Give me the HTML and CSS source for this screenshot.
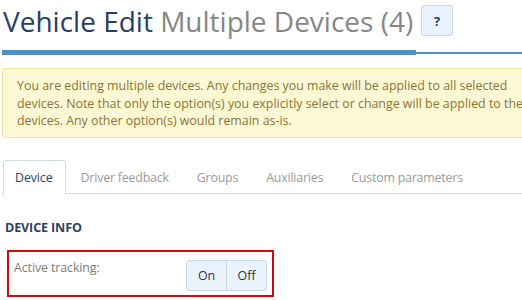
FILE: index.html
```html
<!DOCTYPE html>
<html>
<head>
<meta charset="utf-8">
<link rel="stylesheet" href="styles.css">
</head>
<body>
<div class="page">
  <div class="header">
    <h1 class="title"><span class="title-main">Vehicle Edit</span> <span class="title-sub">Multiple Devices (4)</span></h1>
    <button class="help-btn">?</button>
  </div>
  <div class="rule"><div class="rule-thick"></div><div class="rule-thin"></div></div>
  <div class="alert">You are editing multiple devices. Any changes you make will be applied to all selected<br>devices. Note that only the option(s) you explicitly select or change will be applied to the<br>devices. Any other option(s) would remain as-is.</div>
  <div class="tabs">
    <div class="tab active">Device</div>
    <div class="tab">Driver feedback</div>
    <div class="tab">Groups</div>
    <div class="tab">Auxiliaries</div>
    <div class="tab">Custom parameters</div>
  </div>
  <h2 class="section-title">DEVICE INFO</h2>
  <div class="field-row">
    <span class="field-label">Active tracking:</span>
    <div class="toggle">
      <span class="toggle-opt">On</span>
      <span class="toggle-opt">Off</span>
    </div>
  </div>
</div>
</body>
</html>
```
FILE: styles.css
```css
html, body {
  margin: 0;
  padding: 0;
  background: #fff;
  overflow: hidden;
}
body {
  font-family: "Open Sans", "Noto Sans", sans-serif;
  width: 522px;
  height: 300px;
}
.page {
  padding-left: 2px;
  width: 560px;
}
.header {
  display: flex;
  align-items: center;
  height: 42px;
  gap: 8px;
}
.title {
  margin: 0;
  font-weight: 400;
  font-size: 28px;
  line-height: 42px;
  letter-spacing: 0;
  padding-left: 1px;
  white-space: nowrap;
}
.title-main { color: #273f66; }
.title-sub { color: #868686; }
.help-btn {
  width: 32px;
  height: 31px;
  margin-top: -1px;
  background: #e9f2fc;
  border: 1px solid #c9daec;
  border-radius: 3px;
  color: #2a3f63;
  font-family: "Open Sans", sans-serif;
  font-weight: 700;
  font-size: 13px;
  padding: 0;
}
.rule {
  display: flex;
  align-items: flex-end;
  margin-top: 8px;
  height: 5px;
}
.rule-thick {
  width: 414px;
  height: 5px;
  background: #4f90c2;
}
.rule-thin {
  flex: 1;
  height: 2px;
  margin-bottom: 1px;
  background: #4f90c2;
}
.alert {
  margin-top: 13px;
  background: #fcf8d4;
  border: 1px solid #f4e69c;
  border-radius: 3px;
  color: #8d7434;
  font-size: 12.4px;
  line-height: 17.5px;
  padding: 8px 14px 7px;
  letter-spacing: 0;
  white-space: nowrap;
}
.tabs {
  display: flex;
  margin-top: 22px;
  border-bottom: 1px solid #cfdce8;
  height: 33px;
  padding-left: 1px;
}
.tab {
  font-size: 12.4px;
  color: #9a9a9a;
  padding: 0 13px;
  line-height: 33px;
  letter-spacing: -0.2px;
  border: 1px solid transparent;
  border-bottom: none;
  border-radius: 3px 3px 0 0;
}
.tab.active {
  color: #2e3f5c;
  background: #fff;
  border-color: #cfdce8;
  margin-bottom: -1px;
  height: 34px;
  padding: 0 12px 0 11px;
  letter-spacing: -0.1px;
}
.tab:nth-child(2) { margin-left: 1px; }
.section-title {
  margin: 26px 0 0 3px;
  font-size: 12.6px;
  font-weight: 700;
  color: #2d3f5e;
  line-height: 16px;
  letter-spacing: -0.15px;
}
.field-row {
  margin: 14px 0 0 5px;
  border: 2px solid #d10a0a;
  display: flex;
  align-items: flex-start;
  justify-content: space-between;
  padding: 8px 5px 0 5px;
  box-sizing: border-box;
  width: 267px;
  height: 47px;
}
.field-label {
  font-size: 12.4px;
  line-height: 17px;
  color: #7c7c7c;
  margin-top: -1px;
  letter-spacing: -0.1px;
}
.toggle {
  display: flex;
  height: 29px;
  border: 1px solid #c6d9ec;
  border-radius: 3px;
  background: #e9f2fd;
}
.toggle-opt {
  font-size: 12.4px;
  color: #333;
  line-height: 29px;
  padding: 0 9px;
  width: 21px;
  text-align: center;
}
.toggle-opt + .toggle-opt {
  border-left: 1px solid #c6d9ec;
}
```
